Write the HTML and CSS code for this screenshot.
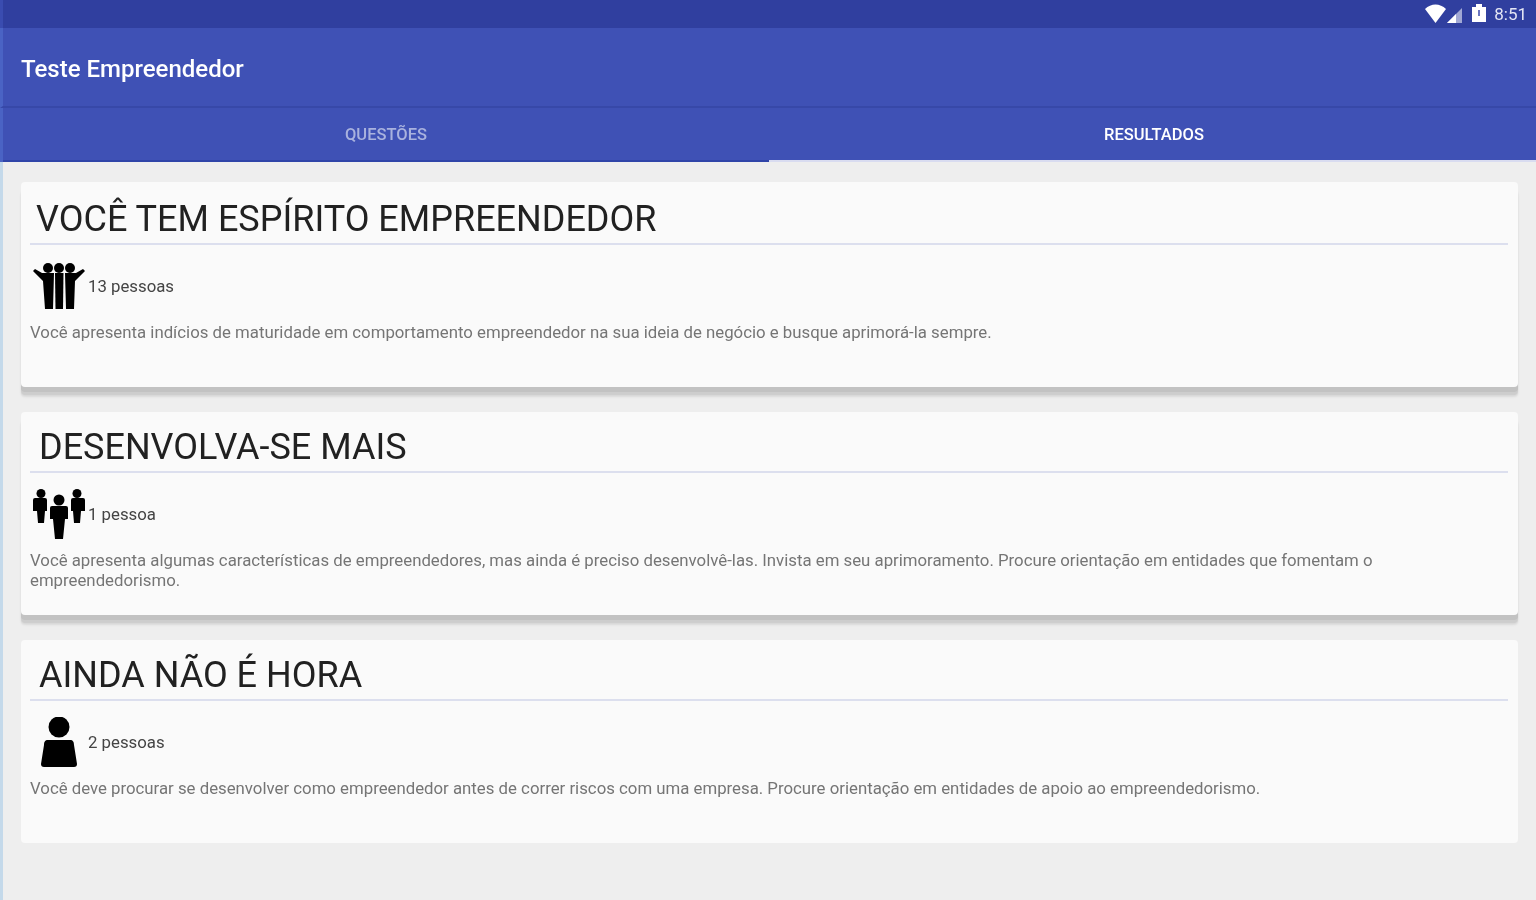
FILE: index.html
```html
<!DOCTYPE html>
<html>
<head>
  <title>Teste Empreendedor</title>
  <link rel="stylesheet" href="styles.css">
</head>
<body>
  <div class="status-bar">
    <svg class="status-icons" width="62" height="20" viewBox="0 0 62 20">
      <path d="M0 5 C6 -1 15 -1 21 5 L10.5 19 Z" fill="#fff"/>
      <path d="M22 19 L37 4 V19 Z" fill="#fff" opacity=".55"/>
      <path d="M22 19 L31 10 V19 Z" fill="#fff"/>
      <path d="M47 3 H51 V0 H57 V3 H61 V18 H47 Z" fill="#fff"/>
      <rect x="53" y="6" width="2" height="6" fill="#6a76c0"/>
    </svg>
    <span class="clock">8:51</span>
  </div>

  <div class="app-bar"><span class="blur-text">Teste Empreendedor</span></div>

  <div class="tabs">
    <div class="tab"><span class="blur-text">QUESTÕES</span></div>
    <div class="tab active"><span class="blur-text">RESULTADOS</span></div>
  </div>

  <div class="content">
    <div class="card first raised">
      <h2>VOCÊ TEM ESPÍRITO EMPREENDEDOR</h2>
      <div class="people">
        <svg class="people-icon" width="52" height="46" viewBox="0 0 52 46">
          <g fill="#000">
            <ellipse cx="15" cy="5" rx="5" ry="5"/>
            <ellipse cx="26" cy="5" rx="5" ry="5"/>
            <ellipse cx="37" cy="5" rx="5" ry="5"/>
            <path d="M0 8 L2 6 L9 10 H21 L20 46 H12 L10 18 Z"/>
            <path d="M22 10 H30.5 L30 46 H22.5 Z"/>
            <path d="M52 8 L50 6 L43 10 H32 L33 46 H41 L42 18 Z"/>
          </g>
        </svg>
        <span>13 pessoas</span>
      </div>
      <p>Você apresenta indícios de maturidade em comportamento empreendedor na sua ideia de negócio e busque aprimorá-la sempre.</p>
    </div>

    <div class="card raised">
      <h2>DESENVOLVA-SE MAIS</h2>
      <div class="people">
        <svg class="people-icon" width="52" height="50" viewBox="0 0 52 50">
          <g fill="#000">
            <circle cx="8" cy="4.5" r="4.5"/>
            <circle cx="44" cy="4.5" r="4.5"/>
            <circle cx="26" cy="11" r="5.5"/>
            <path d="M2 9 H12 Q14 9 14 11 V22 H12 L11 34 H5 L4 22 H0 V11 Q0 9 2 9 Z"/>
            <path d="M40 9 H50 Q52 9 52 11 V22 H48 L47 34 H41 L40 22 H38 V11 Q38 9 40 9 Z"/>
            <path d="M19 17 H33 Q35 17 35 19 V30 H32 L30 50 H22 L20 30 H17 V19 Q17 17 19 17 Z"/>
          </g>
        </svg>
        <span>1 pessoa</span>
      </div>
      <p>Você apresenta algumas características de empreendedores, mas ainda é preciso desenvolvê-las. Invista em seu aprimoramento. Procure orientação em entidades que fomentam o empreendedorismo.</p>
    </div>

    <div class="card">
      <h2>AINDA NÃO É HORA</h2>
      <div class="people">
        <svg class="people-icon" width="52" height="50" viewBox="0 0 52 50">
          <g fill="#000">
            <circle cx="26" cy="10" r="10.5"/>
            <path d="M15 23 H37 C40 23 41 25 41 28 L44 47 C44 49 43 50 41 50 H11 C9 50 8 49 8 47 L11 28 C11 25 12 23 15 23 Z"/>
          </g>
        </svg>
        <span>2 pessoas</span>
      </div>
      <p>Você deve procurar se desenvolver como empreendedor antes de correr riscos com uma empresa. Procure orientação em entidades de apoio ao empreendedorismo.</p>
    </div>
  </div>
</body>
</html>
```

FILE: styles.css
```css
html {
    height: 100%;
}

body {
    margin: 0;
    padding: 0;
    height: 900px;
    overflow: hidden;
    font-family: Roboto, sans-serif;
    background: #eeeeee;
}

.status-bar {
    display: flex;
    justify-content: flex-end;
    align-items: center;
    gap: 7px;
    height: 28px;
    padding-right: 9px;
    background: #303f9f;
    border-left: 3px solid #3a4cb0;
    color: #e4e6f4;
    font-size: 17px;
}

.status-icons {
    display: block;
}

.clock {
    filter: blur(.6px);
}

.blur-text {
    display: inline-block;
    filter: blur(.6px);
}

.app-bar {
    height: 78px;
    padding-left: 18px;
    line-height: 82px;
    font-size: 24px;
    font-weight: 500;
    color: #fff;
    background: #3f51b5;
    border-left: 3px solid #4a63c4;
    border-bottom: 2px solid #3748a8;
}

.tabs {
    display: flex;
    height: 54px;
    background: #3f51b5;
    border-left: 3px solid #4a63c4;
    font-size: 16.5px;
    font-weight: 500;
    color: #fff;
}

.tab {
    flex: 0 0 766px;
    text-align: center;
    line-height: 54px;
    color: #a9b2de;
    border-bottom: 2px solid #2f44a8;
    box-sizing: border-box;
}

.tab.active {
    flex: 1;
    padding-left: 3px;
    color: #fff;
    border-bottom: 2px solid #d9dcf0;
}

.content {
    height: 738px;
    padding: 20px 18px 0 18px;
    border-left: 3px solid #c4d9ea;
    box-sizing: border-box;
}

.card {
    height: 203px;
    box-sizing: border-box;
    padding: 0 10px 0 9px;
    background: #fafafa;
    border-radius: 4px;
    margin-bottom: 25px;
}

.card.first {
    height: 205px;
}

.card.raised {
    box-shadow: 0 5px 0 #c2c2c2, 0 8px 1px #cdcdcd, 0 10px 2px #dadada;
}

.card h2 {
    margin: 0;
    height: 59px;
    line-height: 70px;
    padding-left: 9px;
    font-size: 36px;
    font-weight: 400;
    color: #212121;
    border-bottom: 2px solid #dcdfee;
    white-space: nowrap;
}

.card.first h2 {
    height: 61px;
    line-height: 74px;
    padding-left: 6px;
}

.card h2,
.people span,
.card p {
    filter: blur(.6px);
}

.people {
    display: flex;
    align-items: center;
    gap: 3px;
    height: 77px;
    padding: 4px 0 0 3px;
    box-sizing: border-box;
    font-size: 16.8px;
    color: #444;
}

.people-icon {
    flex: none;
}

.card p {
    margin: 0;
    padding-right: 60px;
    font-size: 16.8px;
    line-height: 20px;
    color: #757575;
}
```
